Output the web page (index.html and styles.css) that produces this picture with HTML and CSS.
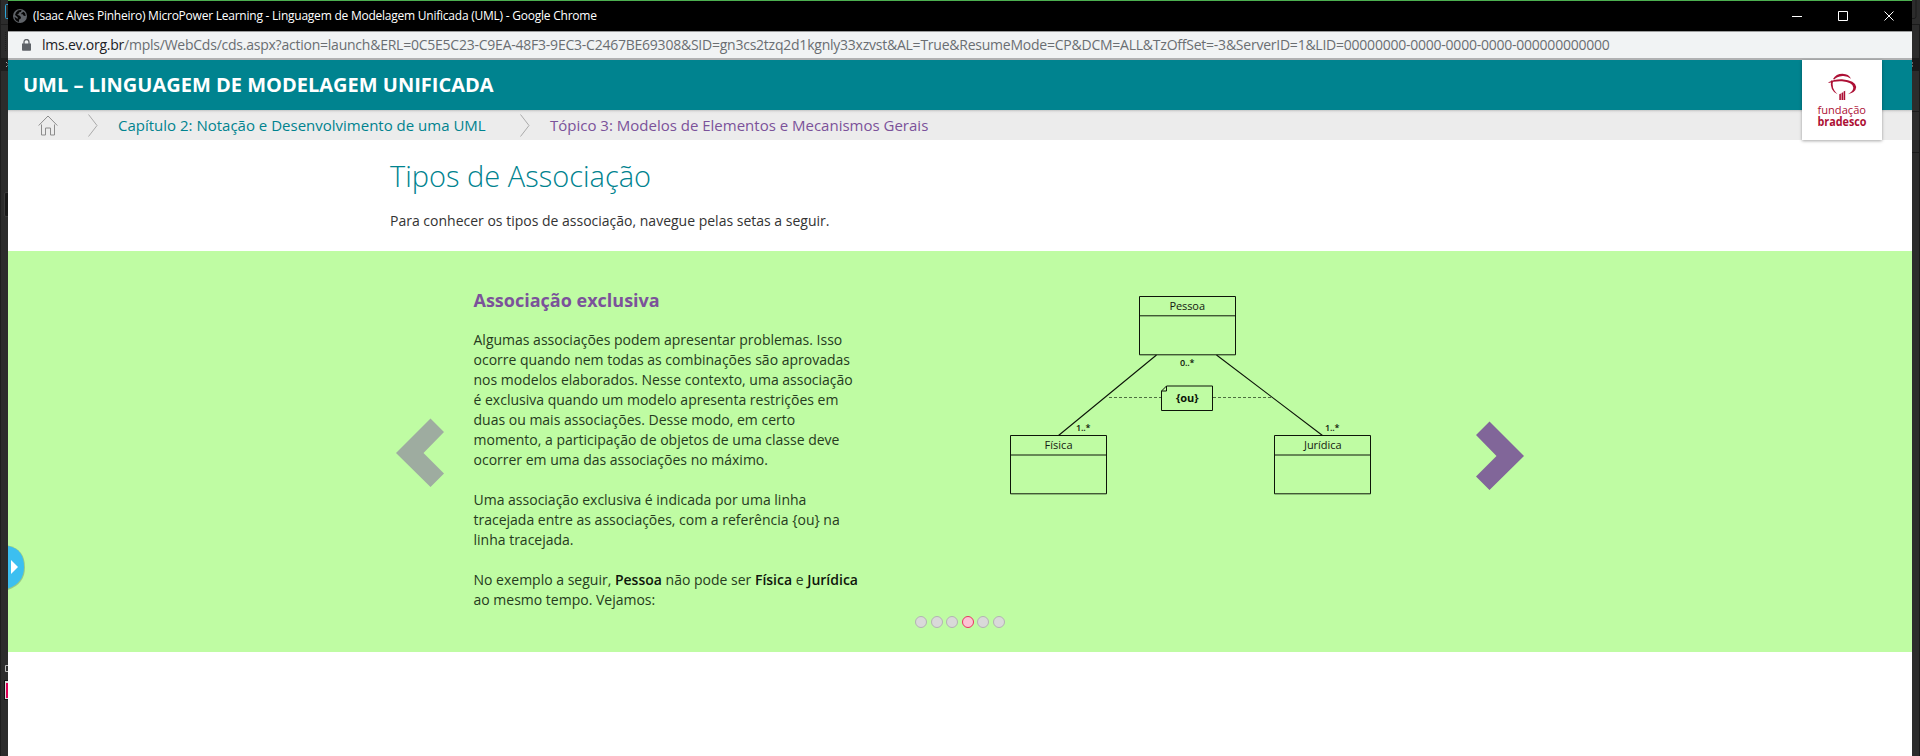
FILE: index.html
```html
<!DOCTYPE html>
<html lang="pt-BR">
<head>
<meta charset="utf-8">
<title>UML – Linguagem de Modelagem Unificada</title>
<link rel="stylesheet" href="styles.css">
</head>
<body>
<div class="desktop">
  <svg class="edge" width="8" height="756" viewBox="0 0 8 756">
    <path fill="#2c2c2c" d="M0 0h8v756H0z"/>
    <path fill="#1e1e1e" d="M0 0h1v756H0zM0 24h8v1H0zM0 58h8v13H0z"/>
    <path fill="none" stroke="#2da5d8" d="M8 4.500H6.500q-1 0-1 1v12q0 1 1 1H8"/>
    <path stroke="#1f1f1f" stroke-dasharray="1 1" d="M5.500 32v20"/>
    <path fill="none" stroke="#aaa" d="M6 62l1.500 1.500M6 67l1.500-1.500"/>
    <path fill="#181818" stroke="#3a3a3a" d="M8 192.500H6q-1.500 0-1.500 1.500v21q0 1.500 1.500 1.500h2"/>
    <path fill="none" stroke="#bbb" d="M8 665.500H5.500v6H8"/>
    <path fill="#111" d="M4 680h4v20H4z"/><path fill="#ddd" d="M5 681h3v18H5z"/><path fill="#dc0055" d="M6 683H8v15H6z"/>
  </svg>
  <div class="window">
    <header class="titlebar">
      <svg class="globe" width="14" height="14" viewBox="0 0 14 14"><circle cx="7" cy="7" r="7" fill="#5f6368"/><path fill="#050505" d="M5 1.500Q7 .8 8.600 1.300L8 2.700 6 3.500 5.500 5 4 5.800 6.300 6.400 8 8l-.4 1.700-1.500.8L6 13Q1.800 12 1.500 7.800L4.600 10 4.700 8.300 2 6Q2.500 3 5 1.500zM8.500 4l2.200-1.300Q12.600 4.200 12.700 7L10.700 6.800 9.800 5.300 8.200 5.200z"/></svg>
      <span class="titlebar-text">(Isaac Alves Pinheiro) MicroPower Learning - Linguagem de Modelagem Unificada (UML) - Google Chrome</span>
      <svg class="controls" width="103" height="12" viewBox="0 0 103 12" fill="none" stroke="#fff"><path d="M0 6.500h10M46.500 1.500h9v9h-9zM92.500 1.500l9 9M101.500 1.500l-9 9"/></svg>
    </header>
    <div class="address">
      <svg class="lock" width="9" height="12" viewBox="0 0 9 12"><path fill="#5f6368" d="M0 4.500h9V11q0 .8-.8.8H.8Q0 11.800 0 11z"/><path fill="none" stroke="#5f6368" stroke-width="1.300" d="M2 5V3a2.500 2.500 0 0 1 5 0v2"/></svg>
      <span class="url"><span class="host">lms.ev.org.br</span>/mpls/WebCds/cds.aspx?action=launch&amp;ERL=0C5E5C23-C9EA-48F3-9EC3-C2467BE69308&amp;SID=gn3cs2tzq2d1kgnly33xzvst&amp;AL=True&amp;ResumeMode=CP&amp;DCM=ALL&amp;TzOffSet=-3&amp;ServerID=1&amp;LID=00000000-0000-0000-0000-000000000000</span>
    </div>
    <div class="course"><h1 class="course-title">UML – LINGUAGEM DE MODELAGEM UNIFICADA</h1></div>
    <nav class="crumbs">
      <svg class="home" width="20" height="21" viewBox="0 0 20 21" fill="none" stroke="#8c8c8c"><path d="M3.500 9.500v10.500h4v-7h5v7h4V9.500M.7 10.500L10 1l9.300 9.500"/></svg>
      <svg class="sep" width="10" height="23" viewBox="0 0 10 23" fill="none" stroke="#aaa"><path d="M.5 .5l8.500 11-8.500 11"/></svg>
      <span class="crumb chapter">Capítulo 2: Notação e Desenvolvimento de uma UML</span>
      <svg class="sep" width="10" height="23" viewBox="0 0 10 23" fill="none" stroke="#aaa"><path d="M.5 .5l8.500 11-8.500 11"/></svg>
      <span class="crumb topic">Tópico 3: Modelos de Elementos e Mecanismos Gerais</span>
    </nav>
    <div class="brand">
      <svg width="80" height="80" viewBox="0 0 80 80">
        <path fill="#ad1035" d="M31 19Q34 13.800 40.500 13.800 47 14 49 18.800 45 15.600 40.500 16 34.500 16.500 32.300 19.500zM26.500 22.300Q32 19 40 19.200 53.500 20.300 54.200 27 53.800 32.500 46 34.200 51.500 31 51.300 27.500 50.500 22 40 21.300 32 21 26.500 22.900zM29 20.500h2.200Q28.800 28 35.500 34.300 27.500 30.500 29 20.500zM37.300 34.200l1.600-.6V40h-1.600zM39.500 33l1.600-.8V40h-1.600zM41.600 31.500l1.600-.8V40h-1.600z"/>
        <text class="brand-light" x="15.500" y="53.500" textLength="48.500" lengthAdjust="spacingAndGlyphs">fundação</text>
        <text class="brand-bold" x="15.500" y="65.500" textLength="49" lengthAdjust="spacingAndGlyphs">bradesco</text>
      </svg>
    </div>
    <section class="intro">
      <h2 class="page-title">Tipos de Associação</h2>
      <p class="lead">Para conhecer os tipos de associação, navegue pelas setas a seguir.</p>
    </section>
    <section class="carousel">
      <svg class="prev" width="48" height="70" viewBox="0 0 48 70"><path fill="#9eaca0" d="M0 35L34.500.5 48 14 27.500 35 48 55.500 34.500 69z"/></svg>
      <article class="slide">
        <h3 class="slide-title">Associação exclusiva</h3>
        <p>Algumas associações podem apresentar problemas. Isso<br>ocorre quando nem todas as combinações são aprovadas<br>nos modelos elaborados. Nesse contexto, uma associação<br>é exclusiva quando um modelo apresenta restrições em<br>duas ou mais associações. Desse modo, em certo<br>momento, a participação de objetos de uma classe deve<br>ocorrer em uma das associações no máximo.</p>
        <p>Uma associação exclusiva é indicada por uma linha<br>tracejada entre as associações, com a referência {ou} na<br>linha tracejada.</p>
        <p>No exemplo a seguir, <b>Pessoa</b> não pode ser <b>Física</b> e <b>Jurídica</b><br>ao mesmo tempo. Vejamos:</p>
      </article>
      <svg class="diagram" width="370" height="210" viewBox="1005 290 370 210">
        <g fill="none" stroke="#0c1408">
          <path d="M1139.500 296.500h96v58.300h-96zM1139.500 315.800h96M1010.500 435.500h96v58.300h-96zM1010.500 455h96M1274.500 435.500h96v58.300h-96zM1274.500 455h96"/>
          <path stroke-width="1.100" d="M1156.500 355L1058.500 435.500M1216.500 355L1322.500 435.500"/>
          <path stroke="#4d7040" stroke-dasharray="3 2" d="M1109 397.500h52M1213 397.500h58"/>
          <path d="M1166.500 386h46v24.500h-51V391zM1166.500 386v5h-5"/>
        </g>
        <g class="uml-name">
          <text x="1169.500" y="309.500" textLength="35.500">Pessoa</text>
          <text x="1044.500" y="448.500" textLength="28">Física</text>
          <text x="1304" y="448.500" textLength="37.500">Jurídica</text>
        </g>
        <g class="uml-card">
          <text x="1180" y="366" textLength="14.500">0..*</text>
          <text x="1076" y="431" textLength="14.500">1..*</text>
          <text x="1325" y="431" textLength="14.500">1..*</text>
        </g>
        <text class="uml-note" x="1176" y="401.500" textLength="22.500">{ou}</text>
      </svg>
      <svg class="next" width="48" height="70" viewBox="0 0 48 70"><path fill="#816699" d="M48 35L13.500.5 0 14 20.500 35 0 55.500 13.500 69z"/></svg>
      <svg class="dots" width="92" height="14" viewBox="914 615 92 14" fill="#d9d9d9" stroke="#b3b3b3">
        <circle cx="921" cy="622" r="5.500"/><circle cx="937" cy="622" r="5.500"/><circle cx="952" cy="622" r="5.500"/><circle cx="968" cy="622" r="5.500" fill="#fcc3d4" stroke="#e5375f"/><circle cx="983" cy="622" r="5.500"/><circle cx="999" cy="622" r="5.500"/>
      </svg>
    </section>
    <svg class="drawer" width="20" height="46" viewBox="8 544 20 46"><path fill="#55704a" opacity=".35" d="M8 545.500Q25 549 25 567.500 25 584 8 590z"/><path fill="#3cbff0" d="M8 546Q24 549 24 567 24 583 8 588.500z"/><path fill="#fff" d="M11 560l7 7-7 7z"/></svg>
  </div>
  <svg class="edge" width="8" height="756" viewBox="0 0 8 756">
    <path fill="#2c2c2c" d="M0 0h8v756H0z"/>
    <path fill="#1a1a1a" d="M0 24h8v1H0zM0 58h8v13H0zM0 111h8v1H0zM0 152h8v1H0zM7 24h1v732H7z"/>
    <path fill="none" stroke="#1a1a1a" d="M0 18.500h2q2 0 2-2V0"/>
    <path fill="#666" d="M0 62h1v2H0zM0 65h1v2H0z"/>
  </svg>
</div>
</body>
</html>
```
FILE: styles.css
```css
* { box-sizing: border-box; }
body { margin: 0; overflow: hidden; font-family: "Open Sans", "Noto Sans", sans-serif; }
h1, h2, h3, p { margin: 0; }
svg { display: block; flex: none; }
.desktop { display: flex; width: 1920px; height: 756px; background: #2c2c2c; border-top: 1px solid #4caf50; }
.edge { margin-top: -1px; }
.window { position: relative; width: 1904px; background: #fff; }
.titlebar { display: flex; align-items: center; height: 30px; padding: 0 17px 0 5px; background: #000; }
.titlebar-text { margin-left: 6px; color: #fff; font: 12px/30px "Open Sans", sans-serif; white-space: nowrap; letter-spacing: -0.235px; }
.controls { margin-left: auto; }
.address { display: flex; align-items: center; height: 29px; padding-left: 14px; background: #f1f3f4; border-top: 1px solid #9b9c9d; border-bottom: 2px solid #b0b1b2; }
.url { margin-left: 11px; color: #6a6e72; font-size: 14px; line-height: 26px; letter-spacing: -0.235px; white-space: nowrap; }
.host { color: #202124; }
.course { height: 50px; padding-left: 15px; background: #00838f; }
.course-title { color: #fff; font-size: 20px; font-weight: 700; line-height: 50px; white-space: nowrap; }
.crumbs { display: flex; align-items: center; height: 30px; padding-left: 30px; background: linear-gradient(#c5c7c7 0, #e6e6e6 2px, #ececec 4px); font-size: 15px; white-space: nowrap; }
.crumb { line-height: 30px; }
.home + .sep { margin-left: 30px; }
.chapter { width: 372px; margin-left: 20px; color: #00838f; }
.chapter + .sep { margin-left: 30px; }
.topic { margin-left: 20px; color: #7b529a; }
.brand { position: absolute; top: 59px; right: 30px; width: 80px; height: 80px; background: #fff; box-shadow: 0 1px 3px rgba(0, 0, 0, .35); }
.brand text { fill: #ad1035; font-size: 11.5px; }
.brand .brand-bold { font-weight: 700; }
.intro { height: 111px; padding: 14px 0 0 382px; }
.page-title { color: #00838f; font-size: 29px; font-weight: 300; line-height: 44px; }
.lead { margin-top: 13px; color: #333; font-size: 14px; line-height: 20px; }
.carousel { position: relative; display: flex; align-items: flex-start; height: 401px; padding-left: 388px; background: #bffca3; }
.prev { margin-top: 167px; }
.slide { width: 400px; margin: 37px 0 0 29.5px; color: #263b20; font-size: 14px; line-height: 20px; white-space: nowrap; }
.slide p { margin-bottom: 20px; }
.slide b { color: #0e160c; font-weight: 600; }
.slide-title { margin-bottom: 18px; color: #7b529a; font-size: 18px; font-weight: 700; line-height: 24px; }
.diagram { margin: 39px 0 0 131.5px; }
.uml-name { fill: #142010; font-size: 11px; }
.uml-card { fill: #0c1408; font-size: 9px; font-weight: 600; }
.uml-note { fill: #0c1408; font-size: 11px; font-weight: 700; }
.next { margin: 170px 0 0 101px; }
.dots { position: absolute; left: 906px; top: 364px; }
.drawer { position: absolute; left: 0; top: 543px; }
```
